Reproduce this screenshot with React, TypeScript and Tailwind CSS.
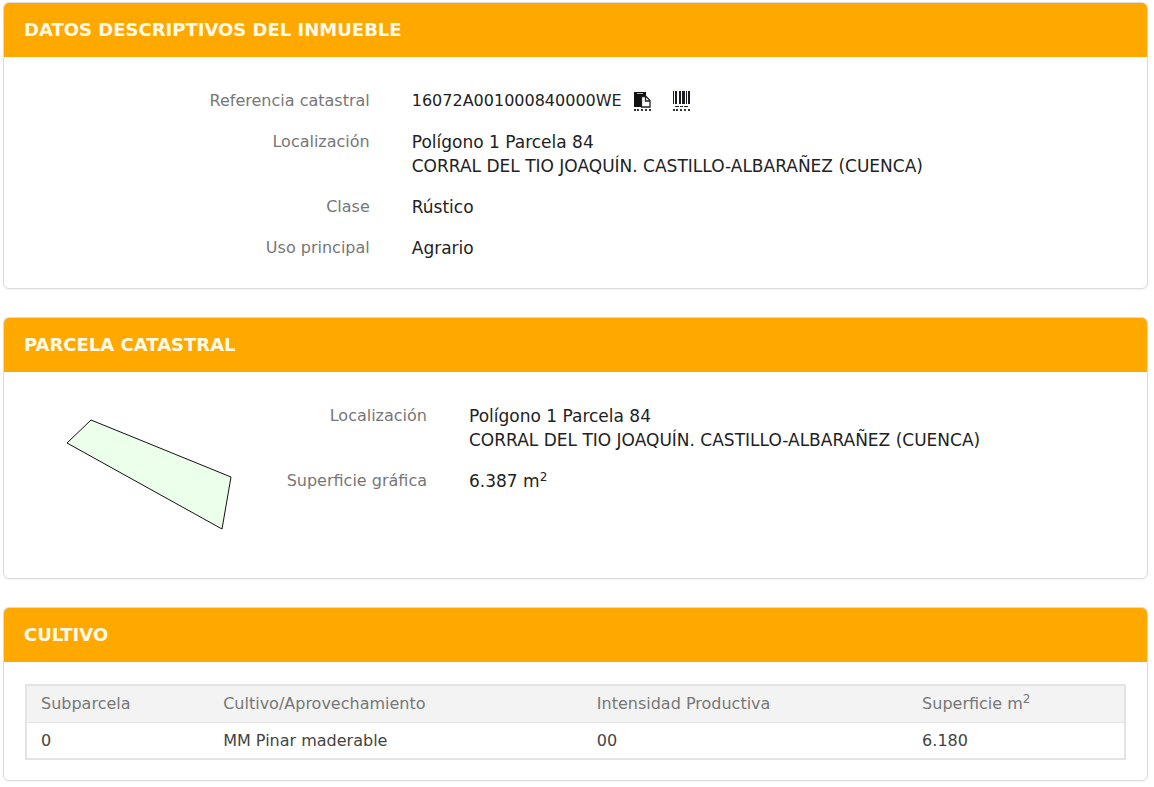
import type { ReactNode } from "react"

const CULTIVOS = [
  { subparcela: "0", cultivo: "MM Pinar maderable", intensidad: "00", superficie: "6.180" },
]

function Panel({ title, children }: { title: string; children: ReactNode }) {
  return (
    <section className="overflow-hidden rounded-md border border-[#dcdcdc] bg-white shadow-xs">
      <h2 className="bg-[#ffa800] px-5 py-[15px] text-lg leading-6 font-bold text-[#fffbe8]">{title}</h2>
      {children}
    </section>
  )
}

function Row({ label, children }: { label: string; children: ReactNode }) {
  return (
    <div className="flex gap-[42px]">
      <dt className="w-[32%] shrink-0 text-right text-[#777]">{label}</dt>
      <dd className="flex-1 text-[17px] text-[#222]">{children}</dd>
    </div>
  )
}

function CopyIcon() {
  return (
    <svg viewBox="0 0 17 17" className="h-[17px] w-[17px]" aria-hidden="true">
      <path d="M0 1h12v4H7v11H0z" fill="#111" />
      <path d="M3 2.500h6" stroke="#aaa" />
      <path d="M7.500 5.500h4.500l4 4v6.500H7.500z" fill="#fff" stroke="#222" strokeWidth="1.300" />
      <path d="M11.500 5.500v4.500H16" fill="none" stroke="#222" strokeWidth="1.300" />
    </svg>
  )
}

function BarcodeIcon() {
  return (
    <svg viewBox="0 0 17 17" className="h-[17px] w-[17px]" aria-hidden="true">
      <path d="M0 0h1v13H0zM2 0h2v13H2zM6 0h2v13H6zM9 0h3v13H9zM13 0h1v13h-1zM15 0h2v13h-2z" fill="#1c1c24" />
      <path d="M2 15.500h4M7 15.500h3M11 15.500h4" stroke="#222" />
    </svg>
  )
}

function Direccion() {
  return (
    <>
      Polígono 1 Parcela 84
      <br />
      CORRAL DEL TIO JOAQUÍN. CASTILLO-ALBARAÑEZ (CUENCA)
    </>
  )
}

export default function App() {
  return (
    <main className="flex flex-col gap-7 bg-white pt-0.5 pr-1.5 pb-1 pl-[3px] font-['DejaVu_Sans',Verdana,sans-serif] text-base leading-6">
      <Panel title="DATOS DESCRIPTIVOS DEL INMUEBLE">
        <dl className="space-y-[17px] pt-8 pb-7">
          <Row label="Referencia catastral">
            <span className="flex items-center text-base leading-6">
              16072A001000840000WE
              <button type="button" aria-label="Copiar referencia" className="ml-3 border-b-2 border-dotted border-[#333] pb-px">
                <CopyIcon />
              </button>
              <button type="button" aria-label="Código de barras" className="ml-[22px] border-b-2 border-dotted border-[#333] pb-px">
                <BarcodeIcon />
              </button>
            </span>
          </Row>
          <Row label="Localización">
            <Direccion />
          </Row>
          <Row label="Clase">Rústico</Row>
          <Row label="Uso principal">Agrario</Row>
        </dl>
      </Panel>

      <Panel title="PARCELA CATASTRAL">
        <div className="flex pt-8 pb-12">
          <svg viewBox="0 0 168 112" className="mt-3.5 ml-[62px] h-28 w-[168px] shrink-0" role="img" aria-label="Croquis de la parcela">
            <polygon points="25,2 165,59 156,111 1,25" fill="#ebffeb" stroke="#111" />
          </svg>
          <dl className="flex-1 space-y-[17px]">
            <div className="flex gap-[42px]">
              <dt className="w-[193px] shrink-0 text-right text-[#777]">Localización</dt>
              <dd className="flex-1 text-[17px] text-[#222]">
                <Direccion />
              </dd>
            </div>
            <div className="flex gap-[42px]">
              <dt className="w-[193px] shrink-0 text-right text-[#777]">Superficie gráfica</dt>
              <dd className="flex-1 text-[17px] text-[#222]">
                6.387 m<sup className="text-xs">2</sup>
              </dd>
            </div>
          </dl>
        </div>
      </Panel>

      <Panel title="CULTIVO">
        <div className="px-[21px] pt-[22px] pb-5">
          <table className="w-full table-fixed border-2 border-[#e4e4e4] text-left">
            <colgroup>
              <col className="w-1/6" />
              <col className="w-[34%]" />
              <col className="w-[29.6%]" />
              <col />
            </colgroup>
            <thead className="bg-[#f3f3f3] text-[#777]">
              <tr className="border-b border-[#e4e4e4]">
                <th className="px-3.5 py-1.5 font-normal">Subparcela</th>
                <th className="px-3.5 py-1.5 font-normal">Cultivo/Aprovechamiento</th>
                <th className="px-3.5 py-1.5 font-normal">Intensidad Productiva</th>
                <th className="px-3.5 py-1.5 font-normal">
                  Superficie m<sup className="text-xs">2</sup>
                </th>
              </tr>
            </thead>
            <tbody className="text-[#444]">
              {CULTIVOS.map((c) => (
                <tr key={c.subparcela}>
                  <td className="px-3.5 pt-1.5 pb-[5px]">{c.subparcela}</td>
                  <td className="px-3.5 pt-1.5 pb-[5px]">{c.cultivo}</td>
                  <td className="px-3.5 pt-1.5 pb-[5px]">{c.intensidad}</td>
                  <td className="px-3.5 pt-1.5 pb-[5px]">{c.superficie}</td>
                </tr>
              ))}
            </tbody>
          </table>
        </div>
      </Panel>
    </main>
  )
}
